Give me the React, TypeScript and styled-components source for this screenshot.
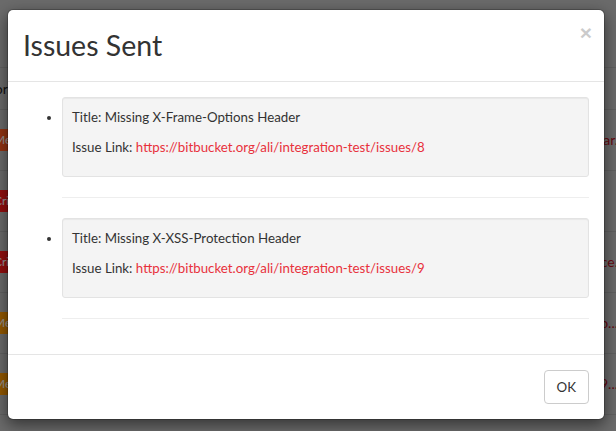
import React from "react";
import styled, { createGlobalStyle } from "styled-components";

const Global = createGlobalStyle`
  html, body { margin: 0; padding: 0; }
  body {
    width: 616px;
    height: 431px;
    overflow: hidden;
    font-family: Lato, "Open Sans", sans-serif;
    font-size: 13.3px;
    line-height: 20px;
    color: #333;
    background: #b9b9b9;
  }
  * { box-sizing: border-box; }
`;

const Page = styled.div`
  position: relative;
  width: 616px;
  height: 431px;
  overflow: hidden;
`;

const PageHeader = styled.div`
  height: 68px;
  border-bottom: 1px solid #a8a8a8;
`;

const HeadRow = styled.div`
  height: 42px;
  display: flex;
  align-items: center;
  border-bottom: 1px solid #a8a8a8;
  color: #222;
  font-size: 14px;
  text-indent: -22px;
`;

const Row = styled.div`
  height: 61px;
  display: flex;
  align-items: center;
  justify-content: space-between;
  border-bottom: 1px solid #a8a8a8;
`;

const Badge = styled.span<{ $c: string }>`
  display: inline-block;
  width: 60px;
  height: 22px;
  line-height: 22px;
  background: ${(p) => p.$c};
  color: #fff;
  font-size: 12px;
  text-indent: -6px;
  white-space: nowrap;
  overflow: hidden;
`;

const RowText = styled.span`
  color: #b01020;
  font-size: 14px;
  white-space: nowrap;
  margin-right: -2px;
`;

const Backdrop = styled.div`
  position: absolute;
  inset: 0;
  background: rgba(0, 0, 0, 0.42);
`;

const Modal = styled.div`
  position: absolute;
  left: 7px;
  top: 9px;
  width: 598px;
  background: #fff;
  border: 1px solid rgba(0, 0, 0, 0.2);
  border-radius: 6px;
  box-shadow: 0 5px 15px rgba(0, 0, 0, 0.5);
  background-clip: padding-box;
`;

const Header = styled.div`
  padding: 15px;
  border-bottom: 1px solid #e5e5e5;
  display: flex;
  justify-content: space-between;
  align-items: flex-start;
`;

const Title = styled.h4`
  margin: 0;
  font-size: 28.5px;
  font-weight: 400;
  line-height: 41px;
  color: #333;
`;

const Close = styled.button`
  border: 0;
  background: transparent;
  padding: 0;
  font-family: "Liberation Sans", Arial, sans-serif;
  font-size: 21px;
  font-weight: bold;
  line-height: 1;
  color: #000;
  opacity: 0.2;
  margin-top: -3px;
  margin-right: -3px;
  cursor: pointer;
`;

const Body = styled.div`
  padding: 15px;
`;

const List = styled.ul`
  margin: 0;
  padding-left: 39px;
`;

const Item = styled.li``;

const Well = styled.div`
  padding: 9px;
  background: #f4f4f4;
  border: 1px solid #e3e3e3;
  border-radius: 3px;
  box-shadow: inset 0 1px 1px rgba(0, 0, 0, 0.05);
  margin-bottom: 20px;
`;

const Para = styled.p`
  margin: 0 0 10px;
`;

const Link = styled.a`
  color: #e8313c;
  text-decoration: none;
`;

const Rule = styled.hr`
  margin: 20px 0;
  border: 0;
  border-top: 1px solid #eee;
`;

const Footer = styled.div`
  padding: 15px;
  border-top: 1px solid #e5e5e5;
  display: flex;
  justify-content: flex-end;
`;

const Button = styled.button`
  font-family: inherit;
  font-size: 13.3px;
  line-height: 20px;
  padding: 6px 12px;
  border: 1px solid #ccc;
  border-radius: 4px;
  background: #fff;
  color: #333;
  cursor: pointer;
`;

const issues = [
  { title: "Missing X-Frame-Options Header", link: "https://bitbucket.org/ali/integration-test/issues/8" },
  { title: "Missing X-XSS-Protection Header", link: "https://bitbucket.org/ali/integration-test/issues/9" },
];

const rows = [
  { c: "#ff5a1f", label: "Medium", text: "Similar." },
  { c: "#ff1a1a", label: "Critical", text: "" },
  { c: "#ff1a1a", label: "Critical", text: "Reference." },
  { c: "#ff9a00", label: "Medium", text: "Info..." },
  { c: "#ff9a00", label: "Medium", text: "Issue 9..." },
];

export default function App() {
  return (
    <Page>
      <Global />
      <PageHeader />
      <HeadRow>Priority</HeadRow>
      {rows.map((r, i) => (
        <Row key={i}>
          <Badge $c={r.c}>{r.label}</Badge>
          <RowText>{r.text}</RowText>
        </Row>
      ))}
      <Backdrop />
      <Modal>
        <Header>
          <Title>Issues Sent</Title>
          <Close aria-label="Close">×</Close>
        </Header>
        <Body>
          <List>
            {issues.map((it) => (
              <Item key={it.link}>
                <Well>
                  <Para>Title: {it.title}</Para>
                  <Para>
                    Issue Link: <Link href="#">{it.link}</Link>
                  </Para>
                </Well>
                <Rule />
              </Item>
            ))}
          </List>
        </Body>
        <Footer>
          <Button>OK</Button>
        </Footer>
      </Modal>
    </Page>
  );
}
